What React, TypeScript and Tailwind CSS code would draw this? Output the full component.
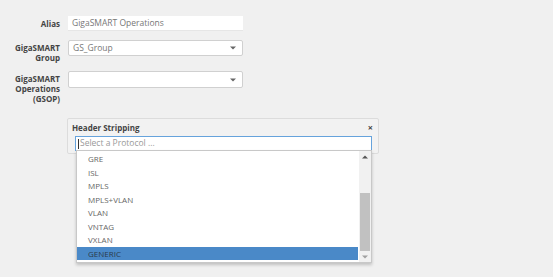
const protocols = ['GRE', 'ISL', 'MPLS', 'MPLS+VLAN', 'VLAN', 'VNTAG', 'VXLAN', 'GENERIC'];

function Caret() {
  return (
    <svg width="6" height="4" viewBox="0 0 6 4" className="shrink-0">
      <path d="M0 0.5 L6 0.5 L3 3.5 Z" fill="#666" />
    </svg>
  );
}

export default function App() {
  const font = { fontFamily: '"Open Sans", "Liberation Sans", sans-serif' };

  return (
    <div className="w-[553px] h-[277px] bg-[#f0f0f0] overflow-hidden text-[#555]" style={font}>
      <div className="flex flex-col">
        <div className="mt-[16px] flex items-center gap-[8px]">
          <div className="w-[60px] text-right text-[8px] font-bold text-[#444] leading-[15px]">Alias</div>
          <div className="w-[175px] h-[15px] bg-white border-b border-[#e6e6e6] flex items-center pl-[4px] text-[8.5px] text-[#777]">
            GigaSMART Operations
          </div>
        </div>

        <div className="mt-[9px] flex items-start gap-[8px]">
          <div className="w-[60px] pt-[3px] text-right text-[8px] font-bold text-[#444] leading-[10px]">
            GigaSMART
            <br />
            Group
          </div>
          <div className="w-[175px] h-[16px] bg-white border border-[#d0d0d0] rounded-[2px] flex items-center justify-between pl-[4px] pr-[6px] text-[8.5px] text-[#777]">
            <span>GS_Group</span>
            <Caret />
          </div>
        </div>

        <div className="mt-[8px] flex items-start gap-[8px]">
          <div className="w-[60px] pt-[3px] text-right text-[8px] font-bold text-[#444] leading-[10px]">
            GigaSMART
            <br />
            Operations
            <br />
            (GSOP)
          </div>
          <div className="w-[175px] h-[17px] bg-white border border-[#d0d0d0] rounded-[2px] flex items-center justify-end pr-[6px]">
            <Caret />
          </div>
        </div>

        <div className="relative mt-[14px] ml-[67px] w-[312px] h-[36px] bg-[#f2f2f2] border border-[#dcdcdc] rounded-[2px]">
          <div className="flex items-center justify-between pl-[4px] pr-[5px] pt-[4px]">
            <span className="text-[8px] font-bold text-[#444] leading-[10px]">Header Stripping</span>
            <span className="text-[9px] font-bold text-[#444] leading-[10px]">×</span>
          </div>
          <div className="ml-[7px] mt-[3px] w-[297px] h-[15px] bg-white border border-[#66a3dc] flex items-center pl-[2px] text-[8.5px] text-[#999]">
            <span className="w-px h-[10px] bg-[#333] mr-px" />
            Select a Protocol ...
          </div>

          <div className="absolute left-[8px] top-[31px] w-[296px] h-[113px] bg-white border border-[#c8c8c8] shadow-[0_2px_3px_rgba(0,0,0,0.2)] flex">
            <div className="flex-1 pt-[1px]">
              {protocols.map((p) => (
                <div
                  key={p}
                  className={
                    p === 'GENERIC'
                      ? 'h-[13.5px] leading-[13.5px] pl-[11px] text-[8px] bg-[#4a89c8] text-[#2a3a4a]'
                      : 'h-[13.5px] leading-[13.5px] pl-[11px] text-[8px] text-[#666]'
                  }
                >
                  {p}
                </div>
              ))}
            </div>
            <div className="w-[12px] ml-[1px] bg-[#f1f1f1] flex flex-col items-center">
              <div className="h-[12px] flex items-center justify-center">
                <svg width="6" height="4" viewBox="0 0 6 4">
                  <path d="M0 3.5 L6 3.5 L3 0.5 Z" fill="#555" />
                </svg>
              </div>
              <div className="mt-[30px] w-[10px] h-[58px] bg-[#c1c1c1]" />
              <div className="h-[11px] flex items-center justify-center">
                <svg width="6" height="4" viewBox="0 0 6 4">
                  <path d="M0 0.5 L6 0.5 L3 3.5 Z" fill="#a0a0a0" />
                </svg>
              </div>
            </div>
          </div>
        </div>
      </div>
    </div>
  );
}
